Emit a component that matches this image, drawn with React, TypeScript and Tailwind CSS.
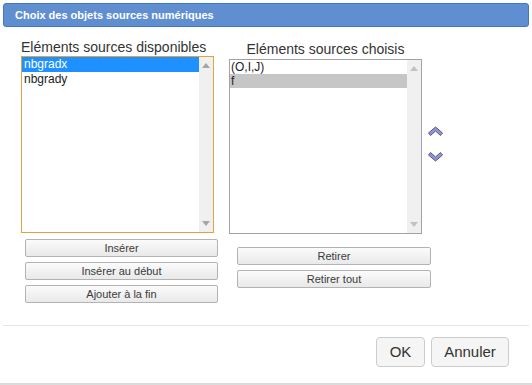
import React from 'react';

const ScrollBar: React.FC<{ arrow: string }> = ({ arrow }) => (
  <div className="w-[14px] h-full bg-[#f0f0f0] flex flex-col items-center justify-between py-[6px]">
    <svg width="8" height="5" viewBox="0 0 8 5">
      <polygon points="0,5 4,0 8,5" fill={arrow} />
    </svg>
    <svg width="8" height="5" viewBox="0 0 8 5">
      <polygon points="0,0 8,0 4,5" fill={arrow} />
    </svg>
  </div>
);

const SmallButton: React.FC<{ label: string }> = ({ label }) => (
  <button className="h-[18px] w-full rounded-[2px] border border-[#b3b3b3] bg-gradient-to-b from-[#fbfbfb] to-[#e9e9e9] text-[11px] font-normal leading-[16px] text-[#3a3a3a]">
    {label}
  </button>
);

const Chevron: React.FC<{ up?: boolean }> = ({ up }) => (
  <svg width="17" height="11" viewBox="0 0 17 11">
    <path
      d={up ? 'M1.5 7 L8.5 1 L15.5 7 L13.5 9.5 L8.5 5 L3.5 9.5 Z' : 'M1.5 4 L8.5 10 L15.5 4 L13.5 1.5 L8.5 6 L3.5 1.5 Z'}
      fill="#9494d4"
      stroke="#55558f"
      strokeWidth="1"
      strokeLinejoin="round"
    />
  </svg>
);

export default function App() {
  return (
    <div className="w-[532px] h-[385px] bg-white flex flex-col font-['Liberation_Sans',Arial,sans-serif] text-[#333]">
      {/* barre de titre */}
      <div className="mx-[3px] mt-[3px] h-[24px] rounded-[3px] bg-[#5f8fd1] border border-[#4076c8] flex items-center pl-[11px]">
        <span className="text-white font-bold text-[11px]">Choix des objets sources numériques</span>
      </div>

      <div className="flex h-[287px] mt-[11px]">
        {/* disponibles */}
        <div className="ml-[21px] w-[197px] flex flex-col">
          <div className="h-[18px] leading-[18px] text-[14px] whitespace-nowrap">Eléments sources disponibles</div>
          <div className="w-[193px] h-[177px] border border-[#e3a23c] flex">
            <div className="flex-1 text-[12px] text-[#222]">
              <div className="h-[15px] leading-[15px] pl-[2px] bg-[#1e90ff] text-white">nbgradx</div>
              <div className="h-[14px] leading-[14px] pl-[2px]">nbgrady</div>
            </div>
            <ScrollBar arrow="#a6a6a6" />
          </div>
          <div className="ml-[4px] w-[193px] mt-[6px] flex flex-col gap-[5px]">
            <SmallButton label="Insérer" />
            <SmallButton label="Insérer au début" />
            <SmallButton label="Ajouter à la fin" />
          </div>
        </div>

        {/* choisis */}
        <div className="ml-[11px] w-[193px] flex flex-col">
          <div className="mt-[2px] h-[18px] leading-[18px] text-[14px] text-center whitespace-nowrap">Eléments sources choisis</div>
          <div className="mt-[1px] w-[193px] h-[175px] border border-[#a3a3a3] flex">
            <div className="flex-1 text-[12px] text-[#222]">
              <div className="h-[14px] leading-[14px] pl-[1px]">(O,I,J)</div>
              <div className="h-[14px] leading-[14px] pl-[1px] bg-[#c6c6c6]">f</div>
            </div>
            <ScrollBar arrow="#c2c2c2" />
          </div>
          <div className="ml-[8px] w-[194px] mt-[13px] flex flex-col gap-[5px]">
            <SmallButton label="Retirer" />
            <SmallButton label="Retirer tout" />
          </div>
        </div>

        {/* monter / descendre */}
        <div className="ml-[5px] mt-[88px] flex flex-col gap-[14px]">
          <Chevron up />
          <Chevron />
        </div>
      </div>

      <div className="mx-[3px] h-px bg-[#e6e6e6]" />

      <div className="flex justify-end gap-[6px] pr-[23px] pt-[11px]">
        <button className="h-[30px] w-[49px] rounded-[4px] border border-[#cccccc] bg-[#f5f5f5] text-[15px] text-[#333]">OK</button>
        <button className="h-[30px] w-[78px] rounded-[4px] border border-[#cccccc] bg-[#f5f5f5] text-[15px] text-[#333]">Annuler</button>
      </div>

      <div className="flex-1" />
      <div className="h-[2px] bg-[#dcdcdc]" />
    </div>
  );
}
